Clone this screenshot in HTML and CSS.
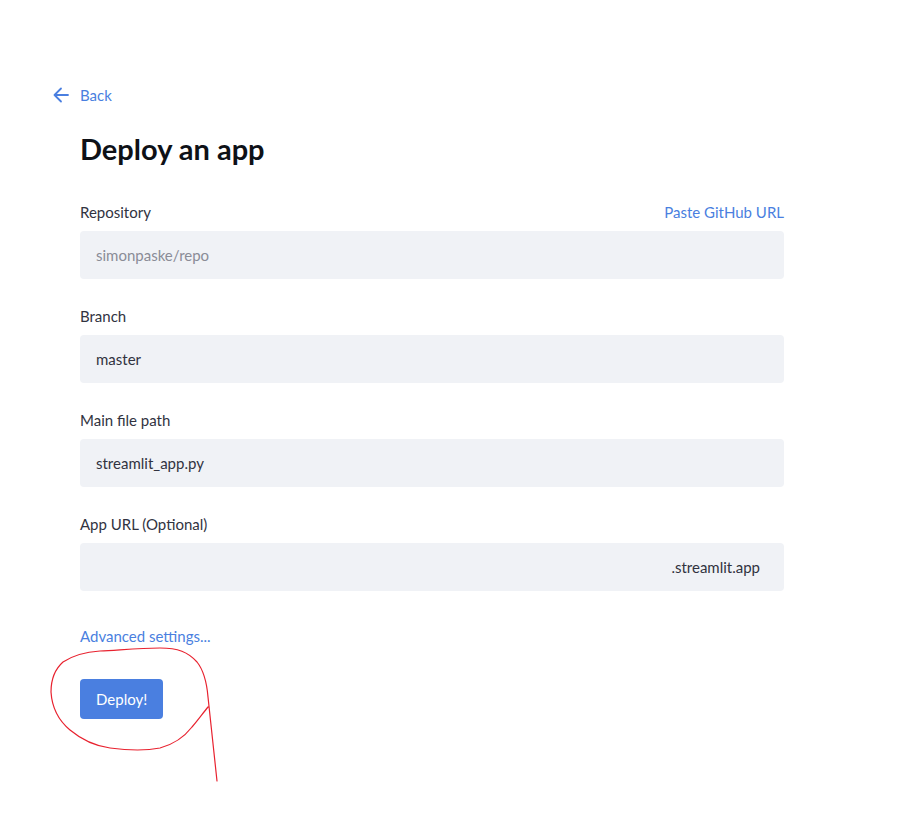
FILE: index.html
```html
<!DOCTYPE html>
<html>
<head>
<meta charset="utf-8">
<link rel="stylesheet" href="styles.css">
</head>
<body>
<div class="page">
  <a class="back" href="#">
    <svg class="back-icon" width="18" height="18" viewBox="0 0 18 18"><path d="M16 9H2.5M9 2.5L2.5 9 9 15.5" fill="none" stroke="#4a7fe0" stroke-width="1.8" stroke-linecap="round" stroke-linejoin="round"/></svg>
    <span>Back</span>
  </a>
  <div class="form">
    <h1 class="title">Deploy an app</h1>
    <div class="field">
      <div class="label-row"><span class="label">Repository</span><a class="link" href="#">Paste GitHub URL</a></div>
      <div class="input muted">simonpaske/repo</div>
    </div>
    <div class="field">
      <div class="label-row"><span class="label">Branch</span></div>
      <div class="input">master</div>
    </div>
    <div class="field">
      <div class="label-row"><span class="label">Main file path</span></div>
      <div class="input">streamlit_app.py</div>
    </div>
    <div class="field">
      <div class="label-row"><span class="label">App URL (Optional)</span></div>
      <div class="input suffix">.streamlit.app</div>
    </div>
    <a class="link advanced" href="#">Advanced settings...</a>
    <button class="deploy">Deploy!</button>
  </div>
</div>
<svg class="annotation" width="917" height="830" viewBox="0 0 917 830"><path d="M217 781 L208 697 C207 685 205 672 197 662 C188 652 178 648 160 648 C140 648 120 650 100 651 C85 652 72 656 63 662 C54 670 51 680 51 692 C52 708 58 720 70 730 C82 740 95 746 110 748 C125 750 145 751 160 748 C175 744 185 736 192 727 C198 720 203 713 208 707" fill="none" stroke="#e8222f" stroke-width="1.2" stroke-linecap="round" stroke-linejoin="round"/></svg>
</body>
</html>
```
FILE: styles.css
```css
* { box-sizing: border-box; }
body {
  margin: 0;
  background: #ffffff;
  font-family: "Source Sans Pro", Lato, "Noto Sans", sans-serif;
  color: #31333f;
}
.page {
  padding: 83px 0 0 52px;
}
.back {
  display: flex;
  align-items: center;
  gap: 10px;
  height: 24px;
  color: #4a7fe0;
  text-decoration: none;
  font-size: 15px;
}
.back-icon { display: block; }
.form {
  margin-left: 28px;
  width: 704px;
  display: flex;
  flex-direction: column;
  align-items: flex-start;
}
.title {
  margin: 24px 0 35px;
  font-size: 29px;
  font-weight: 700;
  line-height: 36px;
  color: #0e1117;
}
.field {
  width: 100%;
  display: flex;
  flex-direction: column;
  gap: 9px;
  margin-bottom: 27px;
}
.label-row {
  display: flex;
  justify-content: space-between;
  align-items: center;
  height: 20px;
  font-size: 15px;
}
.label { color: #31333f; }
.link {
  color: #4a7fe0;
  text-decoration: none;
  font-size: 15px;
}
.input {
  height: 48px;
  width: 100%;
  background: #f0f2f6;
  border-radius: 4px;
  padding: 0 16px;
  display: flex;
  align-items: center;
  font-size: 15px;
  color: #31333f;
}
.input.muted { color: #8a8c96; }
.input.suffix { justify-content: flex-end; padding-right: 24px; }
.advanced {
  margin-top: 8px;
  line-height: 20px;
}
.deploy {
  margin-top: 33px;
  height: 40px;
  padding: 0 16px;
  border: none;
  border-radius: 4px;
  background: #4a7fe0;
  color: #ffffff;
  font-family: inherit;
  font-size: 15px;
}
.annotation {
  position: absolute;
  left: 0;
  top: 0;
  pointer-events: none;
}
```
